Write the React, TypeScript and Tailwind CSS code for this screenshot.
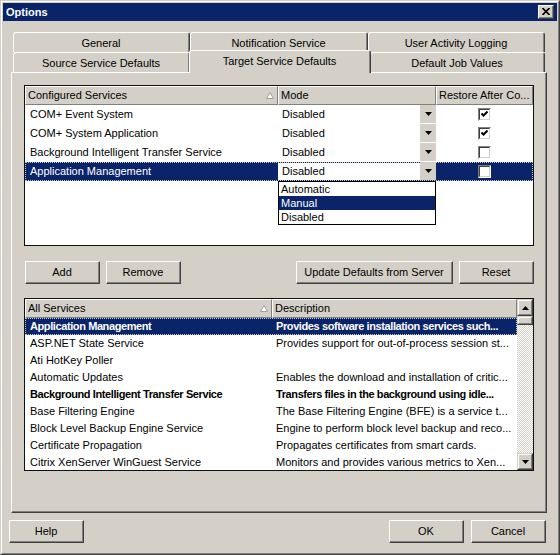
import React from "react";

const configured = [
    { name: "COM+ Event System", checked: true },
    { name: "COM+ System Application", checked: true },
    { name: "Background Intelligent Transfer Service", checked: false },
    { name: "Application Management", checked: false, selected: true },
];

const allServices = [
    { name: "Application Management", desc: "Provides software installation services such...", bold: true, selected: true },
    { name: "ASP.NET State Service", desc: "Provides support for out-of-process session st..." },
    { name: "Ati HotKey Poller", desc: "" },
    { name: "Automatic Updates", desc: "Enables the download and installation of critic..." },
    { name: "Background Intelligent Transfer Service", desc: "Transfers files in the background using idle...", bold: true },
    { name: "Base Filtering Engine", desc: "The Base Filtering Engine (BFE) is a service t..." },
    { name: "Block Level Backup Engine Service", desc: "Engine to perform block level backup and reco..." },
    { name: "Certificate Propagation", desc: "Propagates certificates from smart cards." },
    { name: "Citrix XenServer WinGuest Service", desc: "Monitors and provides various metrics to Xen..." },
];

function Button({ label, w }: { label: string; w: string }) {
    return (
        <div className={`${w} h-[23px] border border-t-white border-l-white border-r-[#404040] border-b-[#404040]`}>
            <div className="flex h-full items-center justify-center border-r border-b border-[#808080]">
                {label}
            </div>
        </div>
    );
}

function Tab({ label, w }: { label: string; w: string }) {
    return (
        <div className={`${w} h-full rounded-t-[3px] border-l border-t border-r border-l-white border-t-white border-r-[#404040]`}>
            <div className="flex h-full items-center justify-center border-r border-[#808080] pt-px">
                {label}
            </div>
        </div>
    );
}

function HeaderCell({ label, w, sort }: { label: string; w: string; sort?: boolean }) {
    return (
        <div className={`${w} flex h-full items-center justify-between border border-t-white border-l-white border-r-[#808080] border-b-[#808080] pl-[2px] pr-[3px] whitespace-nowrap overflow-hidden`}>
            <span>{label}</span>
            {sort && (
                <svg width="8" height="7" viewBox="0 0 8 7">
                    <path d="M4 0.5 L7.5 6.5 L0.5 6.5 Z" fill="#fff" stroke="#a0a0a0" strokeWidth="1" />
                </svg>
            )}
        </div>
    );
}

function Check({ checked }: { checked: boolean }) {
    return (
        <div className="h-[13px] w-[13px] border border-t-[#808080] border-l-[#808080] border-r-white border-b-white">
            <div className="flex h-full w-full items-center justify-center border border-t-[#404040] border-l-[#404040] border-r-[#d4d0c8] border-b-[#d4d0c8] bg-white">
                {checked && (
                    <svg width="7" height="7" viewBox="0 0 7 7">
                        <path d="M0.5 2.5 L2.5 4.5 L6.5 0.5" stroke="#000" strokeWidth="2" fill="none" />
                    </svg>
                )}
            </div>
        </div>
    );
}

function DownArrow() {
    return (
        <svg width="7" height="4" viewBox="0 0 7 4">
            <path d="M0 0 H7 L3.5 4 Z" fill="#000" />
        </svg>
    );
}

function ScrollBtn({ up }: { up?: boolean }) {
    return (
        <div className="h-[17px] w-[16px] border border-t-[#d4d0c8] border-l-[#d4d0c8] border-r-[#404040] border-b-[#404040] bg-[#d4d0c8]">
            <div className="flex h-full items-center justify-center border border-t-white border-l-white border-r-[#808080] border-b-[#808080]">
                <svg width="7" height="4" viewBox="0 0 7 4">
                    <path d={up ? "M0 4 H7 L3.5 0 Z" : "M0 0 H7 L3.5 4 Z"} fill="#000" />
                </svg>
            </div>
        </div>
    );
}

export default function App() {
    return (
        <div className="h-[555px] w-[560px] border border-t-[#d4d0c8] border-l-[#d4d0c8] border-r-[#404040] border-b-[#404040] bg-[#d4d0c8] text-[11px] leading-none text-black font-[family-name:'Liberation_Sans',Arial,sans-serif]">
            <div className="flex h-full flex-col border border-t-white border-l-white border-r-[#808080] border-b-[#808080] p-px">
                {/* title bar */}
                <div className="flex h-[18px] items-center justify-between bg-[#0a246a] pl-[3px] pr-[3px]">
                    <span className="font-bold text-white">Options</span>
                    <div className="h-[14px] w-[16px] border border-t-white border-l-white border-r-[#404040] border-b-[#404040] bg-[#d4d0c8]">
                        <div className="flex h-full items-center justify-center border-r border-b border-[#808080]">
                            <svg width="8" height="7" viewBox="0 0 8 7">
                                <path d="M0.5 0 L7.5 7 M7.5 0 L0.5 7" stroke="#000" strokeWidth="1.6" />
                            </svg>
                        </div>
                    </div>
                </div>

                {/* tabs */}
                <div className="ml-[8px] mt-[11px] w-[536px]">
                    <div className="flex h-[20px] pl-[2px]">
                        <Tab label="General" w="w-[177px]" />
                        <Tab label="Notification Service" w="w-[178px]" />
                        <Tab label="User Activity Logging" w="w-[177px]" />
                    </div>
                    <div className="flex h-[20px] items-end pl-[2px]">
                        <Tab label="Source Service Defaults" w="w-[177px]" />
                        <div className="relative z-10 -mx-px -mb-px h-[23px] w-[182px] rounded-t-[3px] border-l border-t border-r border-l-white border-t-white border-r-[#404040] bg-[#d4d0c8]">
                            <div className="flex h-full justify-center border-r border-[#808080] pt-[5px]">
                                Target Service Defaults
                            </div>
                        </div>
                        <Tab label="Default Job Values" w="w-[175px]" />
                    </div>

                    {/* panel */}
                    <div className="h-[441px] border border-t-white border-l-white border-r-[#404040] border-b-[#404040]">
                        <div className="h-full border-r border-b border-[#808080] pl-[12px] pt-[12px]">
                            {/* configured services */}
                            <div className="relative h-[161px] w-[510px] border border-[#111] bg-white">
                                <div className="flex h-[19px] bg-[#d4d0c8]">
                                    <HeaderCell label="Configured Services" w="w-[253px]" sort />
                                    <HeaderCell label="Mode" w="w-[158px]" />
                                    <HeaderCell label="Restore After Co..." w="w-[97px]" />
                                </div>
                                {configured.map((r) => (
                                    <div
                                        key={r.name}
                                        className={`flex h-[19px] ${r.selected ? "bg-[#0a246a] text-white outline-1 outline-dotted outline-[#c8c8c8] -outline-offset-1" : ""}`}
                                    >
                                        <div className="flex w-[253px] items-center pl-[5px] whitespace-nowrap">{r.name}</div>
                                        <div className="flex w-[158px]">
                                            <div className={`flex w-[142px] items-center pl-[4px] ${r.selected ? "my-px bg-white text-black" : ""}`}>
                                                Disabled
                                            </div>
                                            <div className="flex h-[18px] w-[16px] items-center justify-center bg-[#d4d0c8]">
                                                <DownArrow />
                                            </div>
                                        </div>
                                        <div className="flex w-[97px] items-center justify-center">
                                            <Check checked={r.checked} />
                                        </div>
                                    </div>
                                ))}

                                {/* open mode dropdown */}
                                <div className="absolute left-[253px] top-[95px] z-20 w-[158px] border border-black bg-white">
                                    <div className="flex h-[14px] items-center pl-[2px]">Automatic</div>
                                    <div className="flex h-[14px] items-center bg-[#0a246a] pl-[2px] text-white">Manual</div>
                                    <div className="flex h-[14px] items-center pl-[2px]">Disabled</div>
                                </div>
                            </div>

                            {/* buttons */}
                            <div className="mt-[15px] flex w-[510px]">
                                <div className="ml-px">
                                    <Button label="Add" w="w-[75px]" />
                                </div>
                                <div className="ml-[6px]">
                                    <Button label="Remove" w="w-[75px]" />
                                </div>
                                <div className="flex-1" />
                                <Button label="Update Defaults from Server" w="w-[157px]" />
                                <div className="ml-[6px]">
                                    <Button label="Reset" w="w-[75px]" />
                                </div>
                            </div>

                            {/* all services */}
                            <div className="mt-[14px] flex h-[173px] w-[510px] overflow-hidden border border-[#111] bg-white">
                                <div className="w-[492px]">
                                    <div className="flex h-[19px] bg-[#d4d0c8]">
                                        <HeaderCell label="All Services" w="w-[247px]" sort />
                                        <HeaderCell label="Description" w="w-[245px]" />
                                    </div>
                                    {allServices.map((r) => (
                                        <div
                                            key={r.name}
                                            className={`flex h-[17px] items-center whitespace-nowrap ${r.bold ? "font-bold tracking-[-0.4px]" : ""} ${r.selected ? "bg-[#0a246a] text-white outline-1 outline-dotted outline-[#c8c8c8] -outline-offset-1" : ""}`}
                                        >
                                            <div className="w-[247px] overflow-hidden pl-[5px]">{r.name}</div>
                                            <div className="w-[245px] overflow-hidden pl-[4px]">{r.desc}</div>
                                        </div>
                                    ))}
                                </div>
                                <div className="flex w-[16px] flex-col">
                                    <ScrollBtn up />
                                    <div className="h-[9px] w-[16px] border border-t-[#d4d0c8] border-l-[#d4d0c8] border-r-[#404040] border-b-[#404040] bg-[#d4d0c8]">
                                        <div className="h-full border border-t-white border-l-white border-r-[#808080] border-b-[#808080]" />
                                    </div>
                                    <div className="flex-1 bg-[image:repeating-conic-gradient(#d4d0c8_0%_25%,#ffffff_0%_50%)] bg-[length:2px_2px]" />
                                    <ScrollBtn />
                                </div>
                            </div>
                        </div>
                    </div>
                </div>

                {/* dialog buttons */}
                <div className="mt-[7px] flex pl-[6px] pr-[11px]">
                    <Button label="Help" w="w-[75px]" />
                    <div className="flex-1" />
                    <Button label="OK" w="w-[75px]" />
                    <div className="ml-[7px]">
                        <Button label="Cancel" w="w-[75px]" />
                    </div>
                </div>
            </div>
        </div>
    );
}
